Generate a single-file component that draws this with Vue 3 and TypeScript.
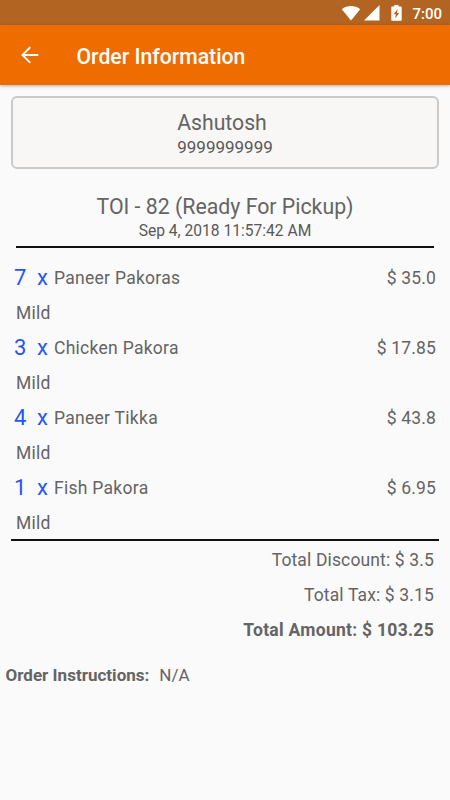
<script setup lang="ts">
interface OrderItem {
  quantity: number
  name: string
  price: string
  spice: string
}

const items: OrderItem[] = [
  { quantity: 7, name: 'Paneer Pakoras', price: '35.0', spice: 'Mild' },
  { quantity: 3, name: 'Chicken Pakora', price: '17.85', spice: 'Mild' },
  { quantity: 4, name: 'Paneer Tikka', price: '43.8', spice: 'Mild' },
  { quantity: 1, name: 'Fish Pakora', price: '6.95', spice: 'Mild' },
]
</script>

<template>
  <div class="screen">
    <div class="status">
      <svg class="wifi" width="20" height="16" viewBox="0 0 20 16">
        <path d="M.8 4.200C6 -.2 14 -.2 19.200 4.200L10 15.600Z" fill="#fff" />
      </svg>
      <svg class="signal" width="16" height="16" viewBox="0 0 16 16">
        <path d="M15.500 0V15.500H0Z" fill="#fff" />
      </svg>
      <svg class="battery" width="11" height="16" viewBox="0 0 11 16">
        <path
          d="M3.300 0h4.200v1.600H10q.7 0 .7.7v12.700q0 .7-.7.7H1q-.7 0-.7-.7V2.300q0-.7.7-.7h2.300ZM6.600 4 2.700 9.300h2.200L4.100 13.400 8.200 7.900H6Z"
          fill="#fff"
          fill-rule="evenodd"
        />
      </svg>
      <span class="clock">7:00</span>
    </div>
    <header class="toolbar">
      <svg class="back" width="18" height="18" viewBox="0 0 18 18">
        <path d="M17.300 9H1.600M9.300 1.200 1.500 9l7.800 7.800" fill="none" stroke="#fff" stroke-width="1.900" />
      </svg>
      <h1>Order Information</h1>
    </header>
    <main>
      <section class="customer">
        <div class="name">Ashutosh</div>
        <div class="phone">9999999999</div>
      </section>
      <section class="summary">
        <div class="order">TOI - 82 (Ready For Pickup)</div>
        <div class="date">Sep 4, 2018 11:57:42 AM</div>
      </section>
      <ul class="items">
        <li v-for="item in items" :key="item.name">
          <div class="row">
            <span class="qty">{{ item.quantity }}</span>
            <span class="times">x</span>
            <span class="dish">{{ item.name }}</span>
            <span class="price">$ {{ item.price }}</span>
          </div>
          <div class="spice">{{ item.spice }}</div>
        </li>
      </ul>
      <section class="totals">
        <div>Total Discount: $ 3.5</div>
        <div>Total Tax: $ 3.15</div>
        <div class="amount">Total Amount: $ 103.25</div>
      </section>
      <div class="instructions"><b>Order Instructions:</b><span>N/A</span></div>
    </main>
  </div>
</template>

<style>
body {
  background: #fafafa;
}
</style>

<style scoped>
.screen {
  width: 450px;
  height: 800px;
  overflow: hidden;
  background: #fafafa;
  color: #646464;
  font-family: Roboto, sans-serif;
  font-size: 17.5px;
}
.status {
  display: flex;
  align-items: center;
  justify-content: flex-end;
  height: 25px;
  padding-right: 8px;
  box-sizing: border-box;
  background: #b26422;
  color: #fff;
}
.signal {
  margin-left: 3px;
}
.battery {
  margin-left: 11px;
}
.clock {
  width: 29.5px;
  margin-left: 10.5px;
  font-size: 15px;
  font-weight: 500;
  line-height: 25px;
  padding-top: 3px;
  white-space: nowrap;
}
.toolbar {
  display: flex;
  align-items: center;
  height: 60px;
  padding-left: 21px;
  box-sizing: border-box;
  background: #ef6c00;
  color: #fff;
  box-shadow: 0 1px 3px rgba(0, 50, 60, 0.35);
}
h1 {
  margin: 3px 0 0 37.5px;
  font-size: 21.2px;
  font-weight: 500;
  line-height: 28px;
}
main {
  padding-top: 11px;
}
.customer {
  height: 73px;
  margin: 0 11px;
  padding-top: 11px;
  box-sizing: border-box;
  border: 2px solid #cbcac8;
  border-radius: 6px;
  background: #f8f7f5;
  text-align: center;
}
.name {
  padding-right: 6px;
  font-size: 21.2px;
  line-height: 27px;
}
.phone {
  font-size: 17px;
  line-height: 22px;
  color: #585858;
}
.summary {
  height: 79px;
  margin: 0 16px;
  padding-top: 24px;
  box-sizing: border-box;
  border-bottom: 2px solid #111;
  text-align: center;
}
.order {
  font-size: 21.3px;
  line-height: 28px;
}
.date {
  font-size: 15.6px;
  line-height: 21px;
  color: #585858;
}
.items {
  height: 293px;
  margin: 0 11px;
  padding: 12px 3px 0;
  box-sizing: border-box;
  border-bottom: 2px solid #111;
  list-style: none;
}
.row {
  display: flex;
  align-items: center;
  height: 35px;
}
.qty,
.times {
  color: #2456fa;
  font-size: 22px;
}
.qty {
  width: 23px;
}
.times {
  width: 17px;
}
.dish {
  letter-spacing: 0.28px;
}
.price {
  margin-left: auto;
  letter-spacing: 0.16px;
}
.spice {
  height: 35px;
  padding: 1px 0 0 2px;
  box-sizing: border-box;
  line-height: 35px;
  letter-spacing: 0.2px;
}
.totals {
  padding: 2px 16px 0 0;
  text-align: right;
  line-height: 35px;
  letter-spacing: 0.14px;
}
.amount {
  letter-spacing: 0.28px;
  font-weight: 700;
}
.instructions {
  display: flex;
  gap: 10px;
  padding: 10px 0 0 5.5px;
  font-size: 17px;
  line-height: 35px;
  letter-spacing: 0.02px;
}
</style>
